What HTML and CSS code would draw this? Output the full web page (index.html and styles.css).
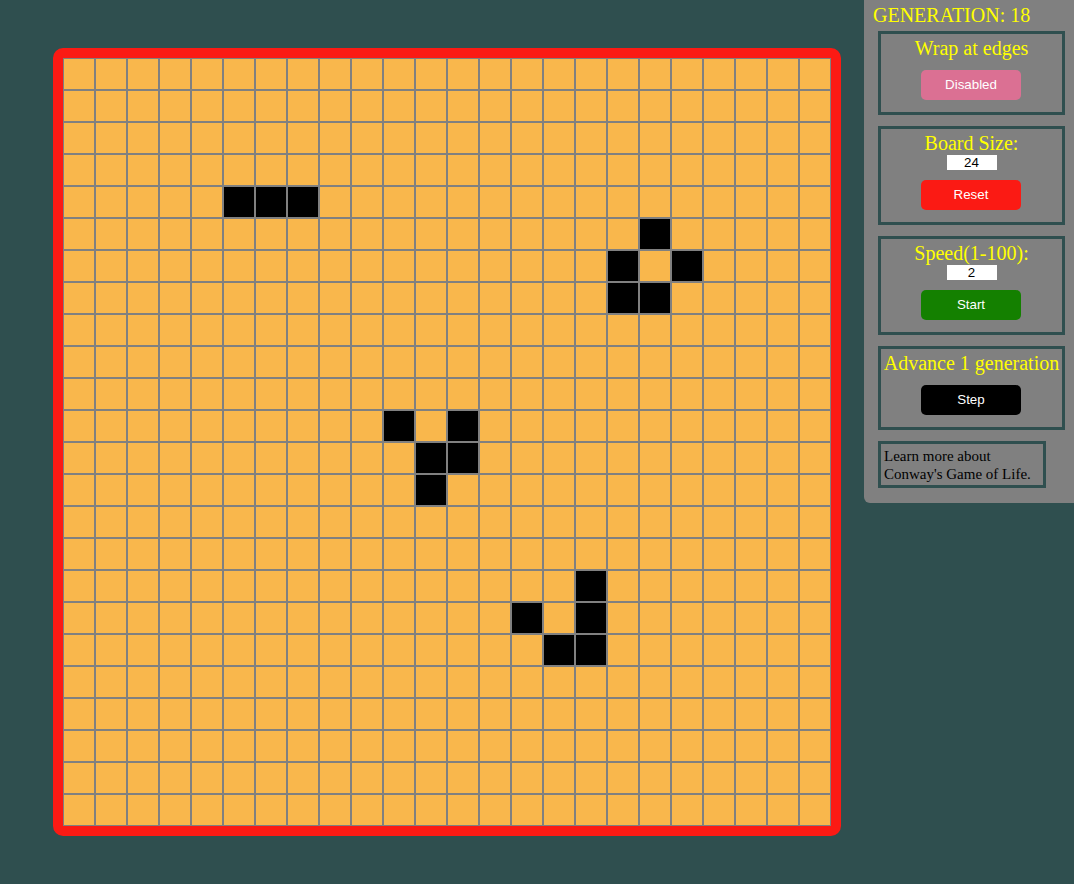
FILE: index.html
```html
<!DOCTYPE html>
<html>
<head>
<meta charset="utf-8">
<title>Conway's Game of Life</title>
<link rel="stylesheet" href="styles.css">
</head>
<body>
<div class="page">
  <div class="board-wrap">
    <div class="board" id="board"></div>
  </div>
  <aside class="panel">
    <div class="generation">GENERATION: 18</div>
    <div class="box">
      <div class="box-title">Wrap at edges</div>
      <button class="btn btn-wrap">Disabled</button>
    </div>
    <div class="box">
      <div class="box-title">Board Size:</div>
      <input class="num" type="text" value="24">
      <button class="btn btn-reset">Reset</button>
    </div>
    <div class="box">
      <div class="box-title">Speed(1-100):</div>
      <input class="num" type="text" value="2">
      <button class="btn btn-start">Start</button>
    </div>
    <div class="box">
      <div class="box-title">Advance 1 generation</div>
      <button class="btn btn-step">Step</button>
    </div>
    <div class="learn">Learn more about Conway's Game of Life.</div>
  </aside>
</div>
<script src="script.js"></script>
</body>
</html>
```
FILE: styles.css
```css
html, body {
  margin: 0;
  padding: 0;
  background: #2f4f4f;
  height: 100%;
}
.page {
  display: flex;
  align-items: flex-start;
  font-family: "Liberation Serif", "Times New Roman", serif;
}
.board-wrap {
  margin: 48px 0 0 53px;
}
.board {
  display: grid;
  grid-template-columns: repeat(24, 32px);
  grid-template-rows: repeat(24, 32px);
  border: 10px solid #fb1a14;
  border-radius: 10px;
  background: #f9b74c;
}
.cell {
  box-sizing: border-box;
  border: 1px solid #808080;
  background: #f9b74c;
}
.cell.alive {
  background: #000;
}
.panel {
  margin-left: auto;
  width: 210px;
  box-sizing: border-box;
  background: #808080;
  border-bottom-left-radius: 6px;
  padding: 4px 9px 15px 14px;
}
.generation {
  color: #ffff00;
  font-size: 20px;
  line-height: 23px;
  margin-left: -5px;
  margin-bottom: 4px;
}
.box {
  border: 3px solid #2f4f4f;
  padding: 3px 0 12px;
  margin-bottom: 11px;
  display: flex;
  flex-direction: column;
  align-items: center;
}
.box-title {
  color: #ffff00;
  font-size: 20px;
  line-height: 23px;
  white-space: nowrap;
}
.num {
  display: block;
  width: 50px;
  height: 15px;
  box-sizing: border-box;
  border: none;
  padding: 0;
  margin: 0;
  background: #fff;
  color: #000;
  text-align: center;
  font-family: "Liberation Sans", Arial, sans-serif;
  font-size: 13.33px;
  line-height: 15px;
}
.btn {
  width: 100px;
  height: 30px;
  margin-top: 10px;
  margin-right: 1px;
  border: none;
  border-radius: 5px;
  color: #fff;
  font-family: "Liberation Sans", Arial, sans-serif;
  font-size: 13.33px;
  line-height: 28px;
  padding: 0;
}
.btn-wrap { background: #db7093; }
.btn-reset { background: #fb1a14; }
.btn-start { background: #148000; }
.btn-step { background: #000; }
.learn {
  width: 168px;
  box-sizing: border-box;
  border: 3px solid #2f4f4f;
  padding: 3px 3px 2px;
  font-size: 15px;
  line-height: 18px;
  color: #000;
}
```
FILE: script.js
```js
(function () {
  var alive = [
    [4,5],[4,6],[4,7],
    [5,18],[6,17],[6,19],[7,17],[7,18],
    [11,10],[11,12],[12,11],[12,12],[13,11],
    [16,16],[17,14],[17,16],[18,15],[18,16]
  ];
  var set = {};
  alive.forEach(function (p) { set[p[0] + "," + p[1]] = true; });
  var board = document.getElementById("board");
  for (var r = 0; r < 24; r++) {
    for (var c = 0; c < 24; c++) {
      var d = document.createElement("div");
      d.className = "cell" + (set[r + "," + c] ? " alive" : "");
      board.appendChild(d);
    }
  }
})();
```
